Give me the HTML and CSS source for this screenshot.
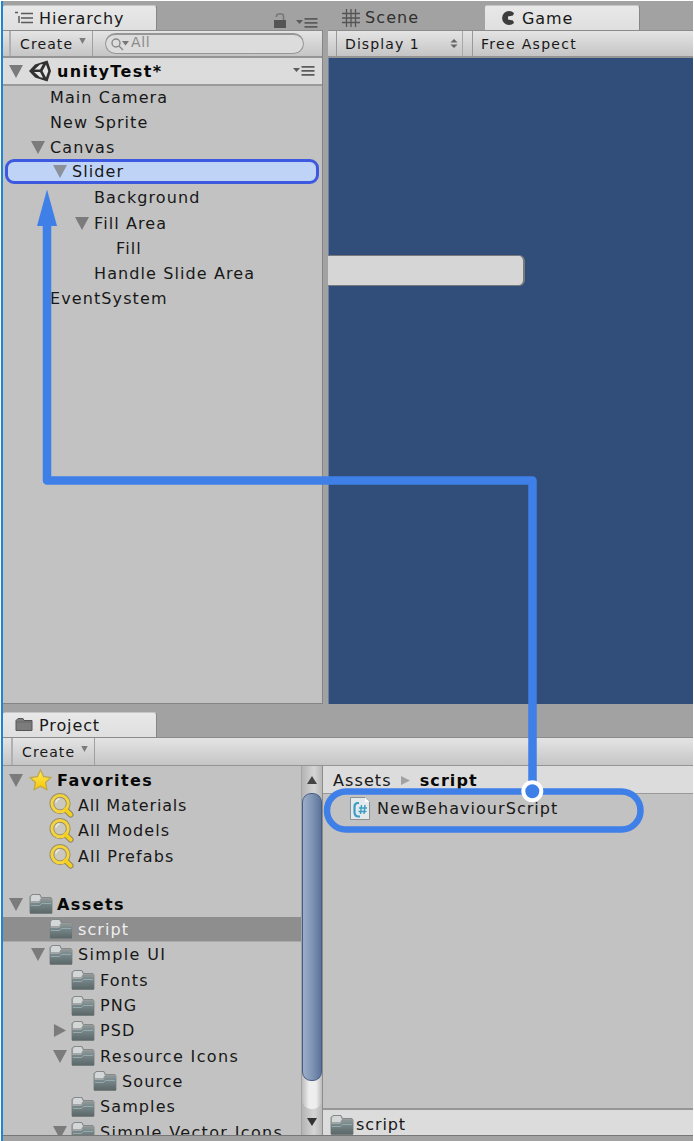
FILE: index.html
```html
<!DOCTYPE html>
<html lang="en">
<head>
<meta charset="utf-8">
<title>Unity Editor</title>
<link rel="stylesheet" href="styles.css">
</head>
<body>
<svg class="defs" aria-hidden="true">
  <defs>
    <linearGradient id="folderFront" x1="0" y1="0" x2="0" y2="1"><stop offset="0" stop-color="#7f9093"/><stop offset="1" stop-color="#5c6869"/></linearGradient>
    <linearGradient id="gold" x1="0" y1="0" x2="0" y2="1"><stop offset="0" stop-color="#ffeb5c"/><stop offset="1" stop-color="#f6c600"/></linearGradient>
    <symbol id="folder" viewBox="0 0 24 22">
      <path d="M1 19V3.500L3 1.500h8l1.500 3H22l1 1.500V20H1z" fill="#a2a6a6" stroke="#858888"/>
      <path d="M2 8V4l1.500-2h6.800l1.500 3.200L10 8z" fill="#d4d7d7"/>
      <path d="M12 5.500h10V8H11z" fill="#8b9292"/>
      <path d="M1 10h9l2-2h11v12H1z" fill="url(#folderFront)"/>
      <path d="M2 12.500h8.500l2-2H22" fill="none" stroke="#98a9ac"/>
      <path d="M1 20.500h22" stroke="#777e7e"/>
    </symbol>
    <symbol id="search" viewBox="0 0 26 26">
      <path d="M17 17l5.500 5.500" stroke="#8d8461" stroke-width="6" stroke-linecap="round"/>
      <circle cx="11.500" cy="11" r="8.500" fill="#cbc9bd" stroke="#9a906b" stroke-width="5"/>
      <circle cx="11.500" cy="11" r="8.500" fill="none" stroke="#f4d43a" stroke-width="3"/>
      <path d="M17 17l5.500 5.500" stroke="#f5cf1d" stroke-width="4" stroke-linecap="round"/>
      <path d="M7 10a5 5 0 0 1 4-4" fill="none" stroke="#eceae2" stroke-width="1.500"/>
    </symbol>
    <symbol id="down" viewBox="0 0 14 13"><path d="M0 0h14L7 13z" fill="#7b7b7b"/></symbol>
    <symbol id="right" viewBox="0 0 13 14"><path d="M0 0l13 7-13 7z" fill="#7b7b7b"/></symbol>
    <symbol id="menu" viewBox="0 0 22 10"><path d="M0 2h7L3.500 6z M8.500 0h13v1.700h-13z M8.500 4h13v1.700h-13z M8.500 8h13v1.700h-13z" fill="#5b5b5b"/></symbol>
  </defs>
</svg>
<div class="editor">
  <div class="top">
    <section class="hierarchy">
      <div class="tabs">
        <div class="tab tab-left">
          <svg class="ic-list" viewBox="0 0 18 14"><path d="M0 1.500h3M6 2.500h12M6 7h12M6 11.500h12M4 5v7" stroke="#5a5a5a" stroke-width="1.500" fill="none"/></svg>
          <span>Hierarchy</span>
        </div>
        <svg class="ic-lock" viewBox="0 0 12 15"><path d="M2.500 4V3a2 2 0 0 1 2-2h3a2 2 0 0 1 2 2v5" fill="none" stroke="#777" stroke-width="1.600"/><path d="M0 7h12v8H0z" fill="#555"/></svg>
        <svg class="ic-menu"><use href="#menu"/></svg>
      </div>
      <div class="toolbar">
        <div class="create">Create<svg class="caret"><use href="#down"/></svg></div>
        <div class="search"><svg class="ic-find" viewBox="0 0 19 13"><circle cx="5" cy="5" r="4" fill="none" stroke="#888" stroke-width="1.400"/><path d="M8 8l4 4" stroke="#888" stroke-width="1.500"/><path d="M11 3h7l-3.500 4.500z" fill="#777"/></svg><span>All</span></div>
      </div>
      <div class="scene">
        <svg class="arrow"><use href="#down"/></svg>
        <svg class="ic-unity" viewBox="0 0 22 22"><path d="M0 11L6 4.500 18.500 0.500 22 11l-3.500 10.500L6 17.500z" fill="#303030"/><path d="M5 10l6-5.500 3-.6-3 5.600H5zM5 12h6l3 5.800-3-.6zM17 4.500l2.300 6.500L17 17.500l-3.500-6.500z" fill="#e4e4e4"/></svg>
        <b>unityTest*</b>
        <svg class="ic-menu"><use href="#menu"/></svg>
      </div>
      <ul class="tree">
        <li class="d1">Main Camera</li>
        <li class="d1">New Sprite</li>
        <li class="d1"><svg class="arrow"><use href="#down"/></svg>Canvas</li>
        <li class="picked"><svg class="arrow"><use href="#down"/></svg>Slider</li>
        <li class="d3">Background</li>
        <li class="d3"><svg class="arrow"><use href="#down"/></svg>Fill Area</li>
        <li class="d4">Fill</li>
        <li class="d3">Handle Slide Area</li>
        <li class="d1">EventSystem</li>
      </ul>
    </section>
    <section class="game">
      <div class="tabs">
        <div class="tab-off"><svg class="ic-grid" viewBox="0 0 18 18"><path d="M4.500 0v18M9 0v18M13.500 0v18M0 4.500h18M0 9h18M0 13.500h18" stroke="#555" stroke-width="1.300"/></svg><span>Scene</span></div>
        <div class="tab tab-game"><svg class="ic-game" viewBox="0 0 14 14"><path d="M13 2A7 7 0 1 0 13 12L12 9.500 7 8.500v-3L12 4.500z" fill="#3c3c3c"/></svg><span>Game</span></div>
      </div>
      <div class="toolbar">
        <div class="display">Display 1<svg class="ic-updown" viewBox="0 0 8 10"><path d="M0 4l4-4 4 4zM0 6h8l-4 4z" fill="#666"/></svg></div>
        <div class="aspect">Free Aspect</div>
      </div>
      <div class="viewport"><div class="slider-bar"></div></div>
    </section>
  </div>
  <section class="project">
    <div class="tabs">
      <div class="tab tab-left"><svg class="ic-project" viewBox="0 0 18 14"><path d="M1 13V3l2-2h5l1 2h8v10z" fill="#7c7c7c" stroke="#555"/><path d="M2 4.500h14" stroke="#666"/></svg><span>Project</span></div>
    </div>
    <div class="toolbar"><div class="create create-project">Create<svg class="caret"><use href="#down"/></svg></div></div>
    <div class="body">
      <ul class="folders">
        <li class="f0"><svg class="arrow"><use href="#down"/></svg><svg class="ic-star" viewBox="0 0 24 24"><path d="M12 1.500l3.300 7 7.500.9-5.500 5.300 1.400 7.600L12 18.600l-6.700 3.700 1.400-7.600L1.200 9.400l7.500-.9z" fill="url(#gold)" stroke="#bca84d" stroke-width="1.300"/></svg><b>Favorites</b></li>
        <li class="f1 tight"><svg class="ic-search"><use href="#search"/></svg>All Materials</li>
        <li class="f1"><svg class="ic-search"><use href="#search"/></svg>All Models</li>
        <li class="f1"><svg class="ic-search"><use href="#search"/></svg>All Prefabs</li>
        <li class="f0 assets"><svg class="arrow"><use href="#down"/></svg><svg class="ic-folder"><use href="#folder"/></svg><b>Assets</b></li>
        <li class="f1 current"><svg class="ic-folder"><use href="#folder"/></svg>script</li>
        <li class="f1 wide"><svg class="arrow"><use href="#down"/></svg><svg class="ic-folder"><use href="#folder"/></svg>Simple UI</li>
        <li class="f2"><svg class="ic-folder"><use href="#folder"/></svg>Fonts</li>
        <li class="f2"><svg class="ic-folder"><use href="#folder"/></svg>PNG</li>
        <li class="f2"><svg class="arrow"><use href="#right"/></svg><svg class="ic-folder"><use href="#folder"/></svg>PSD</li>
        <li class="f2 wide"><svg class="arrow"><use href="#down"/></svg><svg class="ic-folder"><use href="#folder"/></svg>Resource Icons</li>
        <li class="f3"><svg class="ic-folder"><use href="#folder"/></svg>Source</li>
        <li class="f2"><svg class="ic-folder"><use href="#folder"/></svg>Samples</li>
        <li class="f2 wide"><svg class="arrow"><use href="#down"/></svg><svg class="ic-folder"><use href="#folder"/></svg>Simple Vector Icons</li>
      </ul>
      <div class="scroll">
        <svg class="sc-up" viewBox="0 0 10 8"><path d="M5 0l5 8H0z" fill="#444"/></svg>
        <div class="track"><div class="thumb"></div></div>
        <svg class="sc-down" viewBox="0 0 10 8"><path d="M0 0h10L5 8z" fill="#333"/></svg>
      </div>
      <div class="files">
        <div class="crumbs"><span>Assets</span><svg class="ic-crumb" viewBox="0 0 9 9"><path d="M0 0l9 4.500L0 9z" fill="#a2a2a2"/></svg><b>script</b></div>
        <div class="file"><svg class="ic-cs" viewBox="0 0 20 23"><path d="M.5.5H15L19.500 5v17.500H.5z" fill="#e4eaec" stroke="#8b9195"/><path d="M15 .5V5h4.500z" fill="#fff"/><path d="M9 6H8Q4.500 6 4.500 10v5q0 4.500 4 4.500H10" fill="none" stroke="#3b9dc4" stroke-width="2.200"/><path d="M11.500 8l-1 9M15 8l-1 9M9 11h8M8.500 14.500h8" stroke="#3b9dc4" stroke-width="1.400"/></svg><span>NewBehaviourScript</span></div>
        <div class="status"><svg class="ic-folder"><use href="#folder"/></svg><span>script</span></div>
      </div>
    </div>
  </section>
</div>
<svg class="callout" viewBox="0 0 694 1141">
  <path d="M47 220V480.500H532.500V790" fill="none" stroke="#3f7fe8" stroke-width="8.500" stroke-linejoin="round"/>
  <path d="M47 189.500L57 226H37z" fill="#3f7fe8"/>
  <rect x="327" y="791.500" width="313.500" height="38" rx="19" fill="none" stroke="#3f7fe8" stroke-width="6.500"/>
  <circle cx="532.300" cy="791.300" r="9" fill="#3f7fe8" stroke="#fff" stroke-width="4"/>
</svg>
</body>
</html>
```
FILE: styles.css
```css
* { box-sizing: border-box; }
body { margin: 0; width: 694px; height: 1141px; overflow: hidden; position: relative; background: #fff; font: 16px/25px "DejaVu Sans", sans-serif; letter-spacing: 1.1px; color: #181818; white-space: nowrap; }
ul { list-style: none; margin: 0; padding: 0; }
svg { flex: none; display: block; }
b { color: #080808; letter-spacing: 1.400px; }
.defs { position: absolute; width: 0; height: 0; }
.editor { margin: 1px 1px 0; width: 692px; height: 1140px; border-left: 2px solid #1c86d6; background: #a2a2a2; display: flex; flex-direction: column; overflow: hidden; }
.top { display: flex; gap: 5px; height: 703px; flex: none; }
.hierarchy { width: 320px; display: flex; flex-direction: column; background: #c2c2c2; border-right: 1px solid #858585; border-bottom: 1px solid #858585; }
.hierarchy .tabs { margin-right: -1px; }
.game { flex: 1; min-width: 0; display: flex; flex-direction: column; }
.tabs { height: 29px; flex: none; background: #a2a2a2; display: flex; align-items: flex-end; }
.tab { height: 25px; background: linear-gradient(#e8e8e8, #dfdfdf); border-right: 1px solid #868686; border-top: 1px solid #c6c6c6; border-radius: 2px 3px 0 0; display: flex; align-items: center; letter-spacing: .9px; }
.tab-left { width: 154px; padding-left: 12px; gap: 6px; }
.ic-list { width: 18px; height: 14px; }
.ic-project { width: 18px; height: 15px; margin-bottom: 2px; }
.ic-lock { width: 12px; height: 15px; margin: 0 0 2px 117px; }
.ic-menu { width: 22px; height: 10px; }
.tabs .ic-menu { margin: 0 0 2px 10px; }
.toolbar { height: 28px; flex: none; border-top: 1px solid #8b8b8b; border-bottom: 2px solid #949494; background: linear-gradient(#e4e4e4, #c5c5c5); display: flex; font-size: 14px; line-height: 26px; letter-spacing: 1.1px; }
.create { width: 84px; margin-left: 6px; padding-left: 9px; border-left: 2px solid #b0b0b0; border-right: 1px solid #a0a0a0; display: flex; align-items: center; gap: 6px; }
.caret { width: 7px; height: 6px; margin-bottom: 5px; }
.search { width: 199px; height: 21px; margin: 2px 0 0 12px; border: 1px solid #969696; border-top-width: 2px; border-radius: 11px; background: #dcdcdc; display: flex; align-items: center; padding-left: 5px; color: #8b8b8b; gap: 1px; letter-spacing: .6px; line-height: 15px; }
.search span { margin-bottom: 3px; }
.ic-find { width: 19px; height: 13px; }
.scene { height: 28px; flex: none; background: #dcdcdc; border-bottom: 2px solid #9a9a9a; display: flex; align-items: center; padding: 0 7px 0 6px; }
.arrow { width: 14px; height: 13px; }
.ic-unity { width: 22px; height: 22px; margin: 0 6px 0 6px; }
.scene .ic-menu { margin-left: auto; }
.tree { flex: 1; margin-top: -1.500px; }
.tree li { height: 25.200px; display: flex; align-items: center; gap: 5px; }
.tree .arrow { margin-left: -19px; }
.tree .d1 { padding-left: 47px; }
.tree .d3 { padding-left: 91px; }
.tree .d4 { padding-left: 113px; }
.tree .picked { margin: -1px 3px 1px 2px; padding-left: 64px; border: 3px solid #3d59df; border-radius: 9px; background: #bed3f6; }
.picked .arrow { opacity: .75; }
.tab-off { width: 157px; height: 25px; display: flex; align-items: center; padding-left: 14px; gap: 5px; color: #303030; }
.ic-grid { width: 18px; height: 18px; }
.tab-game { width: 155px; padding-left: 16px; gap: 7px; }
.ic-game { width: 14px; height: 14px; }
.display { width: 127px; margin-left: 8px; padding: 0 4px 0 8px; border-left: 1px solid #999; border-right: 1px solid #a8a8a8; display: flex; align-items: center; justify-content: space-between; }
.ic-updown { width: 8px; height: 9px; }
.aspect { margin-left: 9px; border-left: 1px solid #999; padding-left: 8px; display: flex; align-items: center; letter-spacing: 1.300px; }
.viewport { flex: 1; background: #304e79; border-left: 1px solid #6980a3; padding-top: 197px; }
.slider-bar { width: 197px; height: 31px; margin-left: -1px; background: #d6d6d6; border: 1px solid #77797c; border-width: 1px 2px 1px 0; border-radius: 0 6px 6px 0; }
.project { flex: 1; min-height: 0; display: flex; flex-direction: column; border-bottom: 5px solid #a2a2a2; }
.project .tabs { height: 33px; }
.project .toolbar { height: 29px; border-bottom-width: 1px; }
.project .create-project { margin-left: 8px; line-height: 28px; }
.body { display: flex; flex: 1; min-height: 0; background: #c2c2c2; border-bottom: 1px solid #777; }
.folders { width: 298px; overflow: hidden; padding-top: 1.500px; flex: none; }
.folders li { height: 25.300px; display: flex; align-items: center; }
.folders .arrow { margin-left: -18px; margin-right: 4px; }
.folders .f0 .arrow { margin-left: -20px; margin-right: 6px; }
.f0 { padding-left: 26px; }
.f1 { padding-left: 46px; }
.f2 { padding-left: 68px; }
.f3 { padding-left: 90px; }
.wide { letter-spacing: 1.350px; }
.tight { letter-spacing: .85px; }
.ic-folder { width: 24px; height: 22px; margin-right: 5px; }
.ic-star { width: 23px; height: 24px; margin-right: 5px; }
.f0 .ic-folder { margin-right: 4px; }
.ic-search { width: 25px; height: 25px; margin-right: 4px; }
.ic-search use { width: 25px; height: 25px; }
.folders .assets { margin-top: 23px; }
.folders .current { background: #8e8e8e; color: #efefef; border-bottom: 1px solid #aaa; }
.scroll { width: 22px; flex: none; border-left: 1px solid #a3a3a3; border-right: 1px solid #8c8c8c; background: linear-gradient(90deg, #b4b4b4, #d5d5d5 60%, #b9b9b9); display: flex; flex-direction: column; align-items: center; padding: 10px 0 8px; }
.sc-up, .sc-down { width: 10px; height: 8px; }
.track { width: 20px; height: 316px; margin: 9px 0 9px; border-radius: 9px; background: linear-gradient(90deg, #bbb, #eee 35%, #eee 70%, #bbb); }
.thumb { height: 288px; border: 1px solid #465d82; border-radius: 9px; background: linear-gradient(90deg, #9cadc8, #8095b6 50%, #5d749a); }
.files { flex: 1; min-width: 0; display: flex; flex-direction: column; }
.crumbs { height: 28px; background: #dcdcdc; border-bottom: 1px solid #999; display: flex; align-items: center; padding: 1px 0 0 10px; }
.crumbs b { letter-spacing: 1.100px; }
.ic-crumb { width: 9px; height: 9px; margin: 0 10px 0 9px; }
.file { display: flex; align-items: center; padding: 2px 0 0 27px; gap: 7px; letter-spacing: 1.050px; }
.ic-cs { width: 20px; height: 23px; }
.status { margin-top: auto; height: 27px; background: #dcdcdc; border-top: 2px solid #969696; display: flex; align-items: center; padding: 4px 0 0 7px; letter-spacing: .9px; }
.status .ic-folder { margin-right: 2px; }
.callout { position: absolute; inset: 0; width: 694px; height: 1141px; }
```
